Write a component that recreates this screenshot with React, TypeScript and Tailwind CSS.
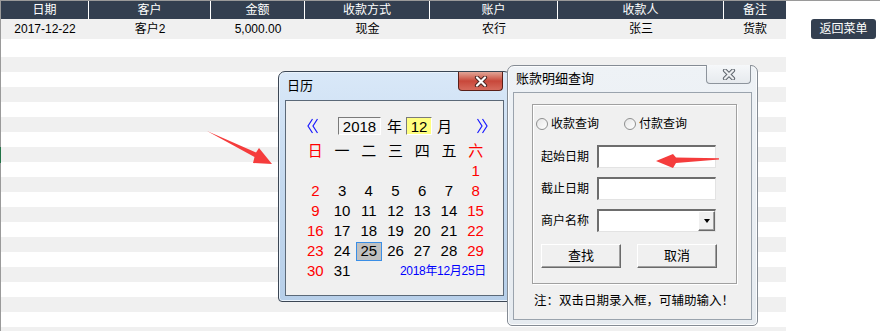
import React from 'react';

const font = "font-['Liberation_Sans','Noto_Sans_CJK_SC',sans-serif]";

const columns = [
  { title: '日期', value: '2017-12-22', cls: 'w-[88px] border-r border-white' },
  { title: '客户', value: '客户2', cls: 'w-[122px] border-r border-white' },
  { title: '金额', value: '5,000.00', cls: 'w-[94px] border-r border-white' },
  { title: '收款方式', value: '现金', cls: 'w-[125px] border-r border-white' },
  { title: '账户', value: '农行', cls: 'w-[128px] border-r border-white' },
  { title: '收款人', value: '张三', cls: 'w-[166px] border-r border-white' },
  { title: '备注', value: '货款', cls: 'w-[62px]' },
];

const emptyRows = Array.from({ length: 19 }, (_, i) => i);

const weeks: (number | null)[][] = [
  [null, null, null, null, null, null, 1],
  [2, 3, 4, 5, 6, 7, 8],
  [9, 10, 11, 12, 13, 14, 15],
  [16, 17, 18, 19, 20, 21, 22],
  [23, 24, 25, 26, 27, 28, 29],
];

const CloseX = ({ fill, edge }: { fill: string; edge: string }) => (
  <svg width="14" height="11" viewBox="0 0 14 11">
    <path d="M3 1.5 L11 9.5 M11 1.5 L3 9.5" stroke={edge} strokeWidth={4.2} strokeLinecap="round" />
    <path d="M3 1.5 L11 9.5 M11 1.5 L3 9.5" stroke={fill} strokeWidth={2.2} strokeLinecap="round" />
  </svg>
);

const Chevrons = ({ left }: { left?: boolean }) => (
  <svg width="11" height="16" viewBox="0 0 11 16">
    {left ? (
      <path d="M5.5 1 L1 8 L5.5 15 M10.5 1 L6 8 L10.5 15" stroke="#1a1aff" strokeWidth={1.2} fill="none" />
    ) : (
      <path d="M0.5 1 L5 8 L0.5 15 M5.5 1 L10 8 L5.5 15" stroke="#1a1aff" strokeWidth={1.2} fill="none" />
    )}
  </svg>
);

const sunken = 'border-t-2 border-l-2 border-b border-r border-t-[#6d6d6d] border-l-[#6d6d6d] border-b-[#e3e3e3] border-r-[#e3e3e3] bg-white';
const raised = 'border border-t-white border-l-white border-b-[#6a6a6a] border-r-[#6a6a6a] bg-[#f0f0f0] shadow-[inset_-1px_-1px_0_#a0a0a0]';

const Radio = () => (
  <span className="w-[12px] h-[12px] rounded-full border border-[#8e8f8f] bg-gradient-to-br from-[#e6e6e6] to-white" />
);

const CalendarWindow = () => (
  <div className="absolute left-[278px] top-[70px] w-[233px] h-[231px] rounded-t-[7px] rounded-b-[4px] border border-[#3b4654] bg-gradient-to-b from-[#d9e8f8] via-[#c4d9ef] to-[#b7cfe9] shadow-[inset_0_0_0_1px_#e9f2fb]">
    <div className="relative h-[28px] flex items-center pl-[8px] text-[13px] text-black">
      日历
      <div className="absolute left-[179px] top-0 w-[45px] h-[19px] rounded-b-[4px] border border-t-0 border-[#5a1f18] bg-gradient-to-b from-[#e0a597] via-[#c8473a] to-[#d66a5c] flex items-center justify-center">
        <CloseX fill="#ffffff" edge="#4a2622" />
      </div>
    </div>
    <div className="mx-[6px] h-[196px] border border-[#5b6978] bg-[#f0f0f0] font-['Liberation_Sans','Noto_Sans_CJK_SC',sans-serif] text-[15px] text-black">
      <div className="mt-[16px] h-[18px] flex items-center">
        <span className="ml-[21px] flex"><Chevrons left /></span>
        <span className={`ml-[20px] w-[43px] h-[18px] flex items-center justify-center border border-t-[#7a7a7a] border-l-[#7a7a7a] border-b-white border-r-white bg-[#f4f4f4] leading-none`}>2018</span>
        <span className="ml-[6px] w-[15px] text-center leading-none">年</span>
        <span className="ml-[4px] w-[26px] h-[18px] flex items-center justify-center border border-t-[#7a7a7a] border-l-[#7a7a7a] border-b-white border-r-white bg-[#ffff80] leading-none">12</span>
        <span className="ml-[5px] w-[15px] text-center leading-none">月</span>
        <span className="ml-[25px] flex"><Chevrons /></span>
      </div>
      <div className="mt-[6px] ml-[16px] w-[187px] grid grid-cols-7">
        {['日', '一', '二', '三', '四', '五', '六'].map((d, i) => (
          <div key={d} className={`h-[20px] flex items-center justify-center ${i === 0 || i === 6 ? 'text-[#ff0000]' : 'text-black'}`}>{d}</div>
        ))}
        {weeks.flat().map((n, i) => (
          <div key={i} className={`h-[20px] flex items-center justify-center ${i % 7 === 0 || i % 7 === 6 ? 'text-[#ff0000]' : 'text-black'}`}>
            {n === 25 ? (
              <span className="w-[26px] h-[19px] flex items-center justify-center bg-[#c0c0c0] border border-[#3a8ee6]">25</span>
            ) : n}
          </div>
        ))}
        <div className="h-[20px] flex items-center justify-center text-[#ff0000]">30</div>
        <div className="h-[20px] flex items-center justify-center">31</div>
        <div className="col-span-5 h-[20px] flex items-center justify-end pr-[3px] text-[12px] text-[#0000ff] tracking-[-0.3px]">2018年12月25日</div>
      </div>
    </div>
  </div>
);

const QueryWindow = () => (
  <div className="absolute left-[507px] top-[64px] w-[251px] h-[261px] rounded-t-[7px] rounded-b-[5px] border border-[#848b94] bg-gradient-to-b from-[#eef2f6] to-[#e6ebf0] shadow-[inset_0_0_0_1px_#fbfcfd]">
    <div className="relative h-[26px] flex items-center pl-[8px] text-[13px] text-black">
      账款明细查询
      <div className="absolute left-[198px] top-[-1px] w-[45px] h-[19px] rounded-b-[4px] border border-t-0 border-[#8d949c] bg-gradient-to-b from-[#f6f8fa] to-[#e6eaee] flex items-center justify-center">
        <CloseX fill="#eceef0" edge="#5e656d" />
      </div>
    </div>
    <div className="mx-[5px] h-[228px] border border-[#9aa3ad] bg-[#f0f0f0] text-[12px] text-black">
      <div className="ml-[18px] mt-[11px] w-[205px] h-[180px] border border-[#a0a0a0] shadow-[inset_1px_1px_0_#ffffff,1px_1px_0_#ffffff]">
        <div className="mt-[13px] ml-[3px] h-[12px] flex items-center">
          <Radio />
          <span className="ml-[3px] w-[48px]">收款查询</span>
          <span className="ml-[25px]" />
          <Radio />
          <span className="ml-[3px]">付款查询</span>
        </div>
        <div className="mt-[15px] ml-[8px] flex items-center">
          <span className="w-[48px]">起始日期</span>
          <div className={`ml-[8px] w-[119px] h-[23px] ${sunken}`} />
        </div>
        <div className="mt-[9px] ml-[8px] flex items-center">
          <span className="w-[48px]">截止日期</span>
          <div className={`ml-[8px] w-[119px] h-[23px] ${sunken}`} />
        </div>
        <div className="mt-[9px] ml-[8px] flex items-center">
          <span className="w-[48px]">商户名称</span>
          <div className={`ml-[8px] w-[119px] h-[23px] flex justify-end ${sunken}`}>
            <div className={`w-[17px] h-full flex items-center justify-center ${raised}`}>
              <span className="w-0 h-0 border-l-[3.5px] border-r-[3.5px] border-t-[4px] border-l-transparent border-r-transparent border-t-black" />
            </div>
          </div>
        </div>
        <div className="mt-[12px] ml-[8px] flex">
          <div className={`w-[80px] h-[24px] flex items-center justify-center text-[13px] ${raised}`}>查找</div>
          <div className={`ml-[16px] w-[80px] h-[24px] flex items-center justify-center text-[13px] ${raised}`}>取消</div>
        </div>
      </div>
      <div className="mt-[8px] ml-[20px] text-[12.5px]">注：双击日期录入框，可辅助输入！</div>
    </div>
  </div>
);

const Arrows = () => (
  <svg className="absolute left-0 top-0 pointer-events-none" width="880" height="331" viewBox="0 0 880 331">
    <polygon points="207,130 256,151.5 259,147 272,163 253,162 254.5,156" fill="#f53c3c" />
    <polygon points="719,157.3 676,156.5 673,153 656,160 673,167 676,162 719,158.4" fill="#f53c3c" />
  </svg>
);

export default function App() {
  return (
    <div className={`relative w-[880px] h-[331px] overflow-hidden bg-white border-t border-[#9a9a9a] ${font}`}>
      <div className="flex">
        <div className="w-[786px] border-l border-[#9a9a9a]">
          <div className="flex h-[18px] bg-[#333f50] text-white text-[12px]">
            {columns.map((c) => (
              <div key={c.title} className={`${c.cls} flex items-center justify-center`}>{c.title}</div>
            ))}
          </div>
          <div className="flex h-[20px] bg-[#f0f0f0] text-black text-[12px]">
            {columns.map((c) => (
              <div key={c.title} className={`${c.cls.split(' ')[0]} flex items-center justify-center`}>{c.value}</div>
            ))}
          </div>
          <div className="h-[18px] bg-white" />
          {emptyRows.map((i) => (
            <div key={i} className={`h-[15px] ${i % 2 === 0 ? 'bg-[#f0f0f0]' : 'bg-white'}`} />
          ))}
        </div>
        <div className="pl-[25px] pt-[18px]">
          <div className="w-[65px] h-[20px] rounded-[3px] bg-[#333f50] text-white text-[12px] flex items-center justify-center">返回菜单</div>
        </div>
      </div>
      <div className="absolute left-0 top-[146px] w-[1px] h-[16px] bg-[#217346]" />
      <CalendarWindow />
      <QueryWindow />
      <Arrows />
    </div>
  );
}
